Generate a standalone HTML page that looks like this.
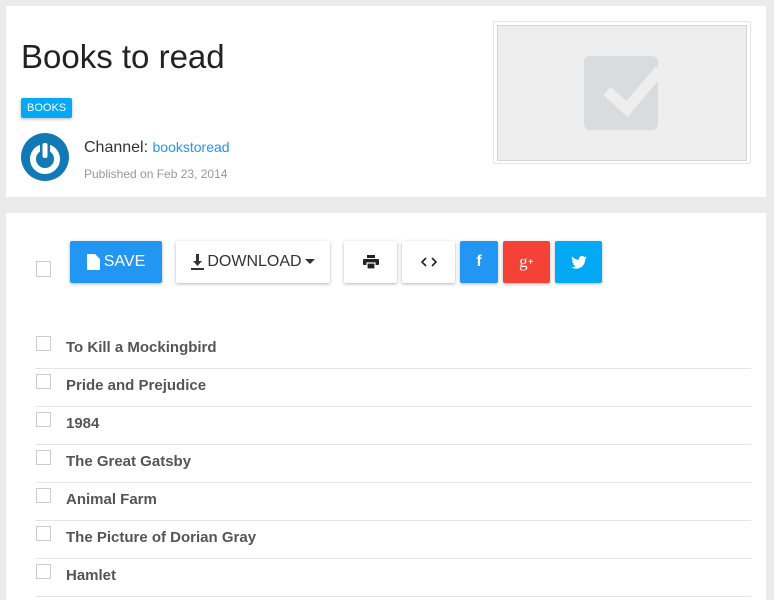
<!DOCTYPE html>
<html style="overflow:hidden"><head><style>
html,body{margin:0;height:600px}
body{background:#ebebeb;font-family:"Liberation Sans",sans-serif;width:774px;overflow:hidden;position:relative}
.card{position:absolute;background:#fff;left:6px;width:760px}
.a{position:absolute}
.btn{position:absolute;top:241px;height:42px;border-radius:2px;box-shadow:0 1px 3px rgba(0,0,0,.3);display:flex;align-items:center;justify-content:center;font-size:16px;color:#333;background:#fff}
.cb{position:absolute;left:36px;width:15px;height:15px;border:1px solid #ccc;box-sizing:border-box;background:#fff}
.row{position:absolute;left:66px;font-size:15px;font-weight:bold;color:#555}
.sep{position:absolute;left:36px;width:715px;height:1px;background:#e6e6e6}
</style></head><body>
<div class="card" style="top:6px;height:191px"></div>
<div class="card" style="top:213px;height:387px"></div>
<div class="a" style="left:21px;top:38px;font-size:33px;color:#222">Books to read</div>
<div class="a" style="left:21px;top:98px;height:20px;padding:0 6px;background:#03a9f4;color:#fff;font-size:11px;line-height:20px;border-radius:2px;box-shadow:0 1px 3px rgba(0,0,0,.3)">BOOKS</div>
<svg class="a" style="left:21px;top:133px" width="48" height="48" viewBox="0 0 48 48"><circle cx="24" cy="24" r="24" fill="#1279b7"/><circle cx="24" cy="26" r="12" fill="none" stroke="#fff" stroke-width="6"/><rect x="19" y="8" width="10" height="16" fill="#1279b7"/><rect x="21.5" y="10" width="5" height="15" rx="2" fill="#fff"/></svg>
<div class="a" style="left:84px;top:139px;font-size:16px;color:#333">Channel: <span style="color:#2196f3;font-size:14px">bookstoread</span></div>
<div class="a" style="left:84px;top:167px;font-size:12px;color:#999">Published on Feb 23, 2014</div>
<div class="a" style="left:493px;top:21px;width:256px;height:141px;border:1px solid #e5e5e5;border-radius:2px"></div>
<div class="a" style="left:497px;top:25px;width:248px;height:134px;background:#eee;border:1px solid #d5d5d5"></div>
<svg class="a" style="left:584px;top:56px" width="74" height="74" viewBox="0 0 74 74"><rect width="74" height="74" rx="6" fill="#d9dcdf"/><polyline points="23,35 43,53 76,14" fill="none" stroke="#eee" stroke-width="11"/></svg>
<div class="cb" style="top:261px;height:16px"></div>
<div class="btn" style="left:70px;width:92px;background:#2196f3;color:#fff"><svg width="13" height="16" viewBox="0 0 13 16" style="margin-right:4px"><path d="M0 0H8L13 5V16H0Z" fill="#fff"/></svg>SAVE</div>
<div class="btn" style="left:176px;width:154px"><svg width="13" height="16" viewBox="0 0 13 16" style="margin-right:3px"><path d="M5 0H8V7H11L6.5 12L2 7H5Z M0 14H13V16H0Z" fill="#333"/></svg>DOWNLOAD<svg width="10" height="6" style="margin-left:3px"><path d="M0 0H10L5 5Z" fill="#333"/></svg></div>
<div class="btn" style="left:344px;width:53px"><svg width="16" height="14" viewBox="0 0 16 14"><rect x="4" y="0" width="8" height="3" fill="#222"/><rect x="0" y="4" width="16" height="6" rx="1" fill="#222"/><rect x="4" y="8" width="8" height="6" fill="#222" stroke="#fff" stroke-width="1.2"/></svg></div>
<div class="btn" style="left:402px;width:53px"><svg width="16" height="10" viewBox="0 0 16 10"><polyline points="5,1 1,5 5,9" fill="none" stroke="#222" stroke-width="1.6"/><polyline points="11,1 15,5 11,9" fill="none" stroke="#222" stroke-width="1.6"/></svg></div>
<div class="btn" style="left:460px;width:38px;background:#2196f3;color:#fff;font-weight:bold">f</div>
<div class="btn" style="left:503px;width:47px;background:#f44336;color:#fff;font-family:'Liberation Serif',serif;font-size:17px">g<sup style="font-size:11px;font-weight:bold">+</sup></div>
<div class="btn" style="left:555px;width:47px;background:#03a9f4"><svg width="16" height="13" viewBox="0 0 24 20"><path d="M24 2.4a10 10 0 0 1-2.8.8A5 5 0 0 0 23.3.4a10 10 0 0 1-3.1 1.2A4.9 4.9 0 0 0 11.8 6 14 14 0 0 1 1.7.9a4.9 4.9 0 0 0 1.5 6.6A4.9 4.9 0 0 1 1 6.9a4.9 4.9 0 0 0 3.9 4.8 5 5 0 0 1-2.2.1 4.9 4.9 0 0 0 4.6 3.4A9.9 9.9 0 0 1 0 17.3 14 14 0 0 0 7.5 19.5c9 0 14-7.5 14-14v-.6A10 10 0 0 0 24 2.4z" fill="#fff"/></svg></div>
<div class="cb" style="top:336px"></div><div class="row" style="top:339px">To Kill a Mockingbird</div><div class="sep" style="top:368px"></div>
<div class="cb" style="top:374px"></div><div class="row" style="top:377px">Pride and Prejudice</div><div class="sep" style="top:406px"></div>
<div class="cb" style="top:412px"></div><div class="row" style="top:415px">1984</div><div class="sep" style="top:444px"></div>
<div class="cb" style="top:450px"></div><div class="row" style="top:453px">The Great Gatsby</div><div class="sep" style="top:482px"></div>
<div class="cb" style="top:488px"></div><div class="row" style="top:491px">Animal Farm</div><div class="sep" style="top:520px"></div>
<div class="cb" style="top:526px"></div><div class="row" style="top:529px">The Picture of Dorian Gray</div><div class="sep" style="top:558px"></div>
<div class="cb" style="top:564px"></div><div class="row" style="top:567px">Hamlet</div><div class="sep" style="top:596px"></div>
</body></html>
